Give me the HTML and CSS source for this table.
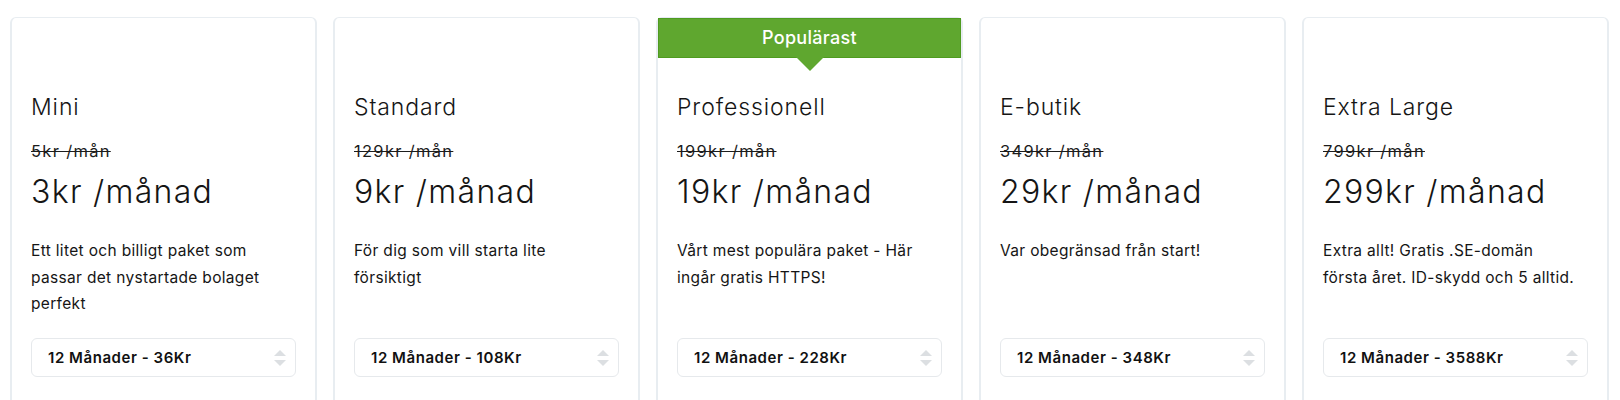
FILE: index.html
```html
<!DOCTYPE html>
<html lang="sv">
<head>
<meta charset="utf-8">
<title>Paket</title>
<link rel="stylesheet" href="styles.css">
</head>
<body>
<div class="plans">
  <div class="plan">
    <div class="plan-badge"></div>
    <h3 class="plan-title">Mini</h3>
    <div class="plan-old">5kr /mån</div>
    <div class="plan-price">3kr /månad</div>
    <p class="plan-desc">Ett litet och billigt paket som<br>passar det nystartade bolaget<br>perfekt</p>
    <div class="plan-select"><span>12 Månader - 36Kr</span><svg class="sel-arrows" width="14" height="16" viewBox="0 0 14 16"><path d="M7 0 L13 6 L1 6 Z" fill="#dcdfe2"/><path d="M1 10 L13 10 L7 16 Z" fill="#dcdfe2"/></svg></div>
  </div>
  <div class="plan">
    <div class="plan-badge"></div>
    <h3 class="plan-title">Standard</h3>
    <div class="plan-old">129kr /mån</div>
    <div class="plan-price">9kr /månad</div>
    <p class="plan-desc">För dig som vill starta lite<br>försiktigt</p>
    <div class="plan-select"><span>12 Månader - 108Kr</span><svg class="sel-arrows" width="14" height="16" viewBox="0 0 14 16"><path d="M7 0 L13 6 L1 6 Z" fill="#dcdfe2"/><path d="M1 10 L13 10 L7 16 Z" fill="#dcdfe2"/></svg></div>
  </div>
  <div class="plan plan-popular">
    <div class="plan-badge">Populärast</div>
    <h3 class="plan-title">Professionell</h3>
    <div class="plan-old">199kr /mån</div>
    <div class="plan-price">19kr /månad</div>
    <p class="plan-desc">Vårt mest populära paket - Här<br>ingår gratis HTTPS!</p>
    <div class="plan-select"><span>12 Månader - 228Kr</span><svg class="sel-arrows" width="14" height="16" viewBox="0 0 14 16"><path d="M7 0 L13 6 L1 6 Z" fill="#dcdfe2"/><path d="M1 10 L13 10 L7 16 Z" fill="#dcdfe2"/></svg></div>
  </div>
  <div class="plan">
    <div class="plan-badge"></div>
    <h3 class="plan-title">E-butik</h3>
    <div class="plan-old">349kr /mån</div>
    <div class="plan-price">29kr /månad</div>
    <p class="plan-desc">Var obegränsad från start!</p>
    <div class="plan-select"><span>12 Månader - 348Kr</span><svg class="sel-arrows" width="14" height="16" viewBox="0 0 14 16"><path d="M7 0 L13 6 L1 6 Z" fill="#dcdfe2"/><path d="M1 10 L13 10 L7 16 Z" fill="#dcdfe2"/></svg></div>
  </div>
  <div class="plan">
    <div class="plan-badge"></div>
    <h3 class="plan-title">Extra Large</h3>
    <div class="plan-old">799kr /mån</div>
    <div class="plan-price">299kr /månad</div>
    <p class="plan-desc">Extra allt! Gratis .SE-domän<br>första året. ID-skydd och 5 alltid.</p>
    <div class="plan-select"><span>12 Månader - 3588Kr</span><svg class="sel-arrows" width="14" height="16" viewBox="0 0 14 16"><path d="M7 0 L13 6 L1 6 Z" fill="#dcdfe2"/><path d="M1 10 L13 10 L7 16 Z" fill="#dcdfe2"/></svg></div>
  </div>
</div>
</body>
</html>
```
FILE: styles.css
```css
html, body {
  margin: 0;
  padding: 0;
  background: #ffffff;
}
body {
  font-family: Inter, "Noto Sans", "Liberation Sans", sans-serif;
  color: #151515;
}
.plans {
  display: flex;
  gap: 16px;
  padding: 17px 11px 0 10px;
}
.plan {
  flex: 1 1 0;
  min-width: 0;
  border: 2px solid #e8edf1;
  border-top-width: 1px;
  border-radius: 6px;
  background: #fff;
  min-height: 420px;
  box-sizing: border-box;
}
.plan-badge {
  height: 40px;
  position: relative;
}
.plan-popular {
  border-top-color: #e6e9f3;
}
.plan-popular .plan-badge {
  background: #5fa72f;
  border: 1px solid #4f9b20;
  box-sizing: border-box;
  color: #fff;
  font-size: 18px;
  font-weight: 500;
  letter-spacing: 0.3px;
  line-height: 38px;
  text-align: center;
}
.plan-popular .plan-badge::after {
  content: "";
  position: absolute;
  left: 50%;
  top: 38px;
  margin-left: -14px;
  border-left: 14px solid transparent;
  border-right: 14px solid transparent;
  border-top: 14px solid #5fa72f;
}
.plan-title,
.plan-old,
.plan-price,
.plan-desc,
.plan-select {
  margin-left: 19px;
  margin-right: 19px;
}
.plan-title {
  font-size: 23px;
  font-weight: 300;
  letter-spacing: 0.9px;
  line-height: 28px;
  margin-top: 35px;
  margin-bottom: 0;
}
.plan-old {
  font-size: 16.5px;
  line-height: 24px;
  letter-spacing: 1.3px;
  margin-top: 18px;
  text-decoration: line-through;
  color: #1c1c1c;
}
.plan-price {
  font-size: 32px;
  font-weight: 300;
  letter-spacing: 1.3px;
  line-height: 40px;
  margin-top: 9px;
}
.plan-desc {
  font-size: 15.5px;
  letter-spacing: 0.33px;
  line-height: 26.5px;
  margin-top: 26px;
  margin-bottom: 0;
  min-height: 79.5px;
}
.plan-select {
  margin-top: 20.5px;
  height: 39px;
  border: 1px solid #e6e9ec;
  border-radius: 6px;
  box-sizing: border-box;
  display: flex;
  align-items: center;
  justify-content: space-between;
  padding: 0 8px 0 16px;
  font-size: 15px;
  font-weight: 600;
  letter-spacing: 0.55px;
  color: #111;
}
.sel-arrows {
  display: block;
}
```
